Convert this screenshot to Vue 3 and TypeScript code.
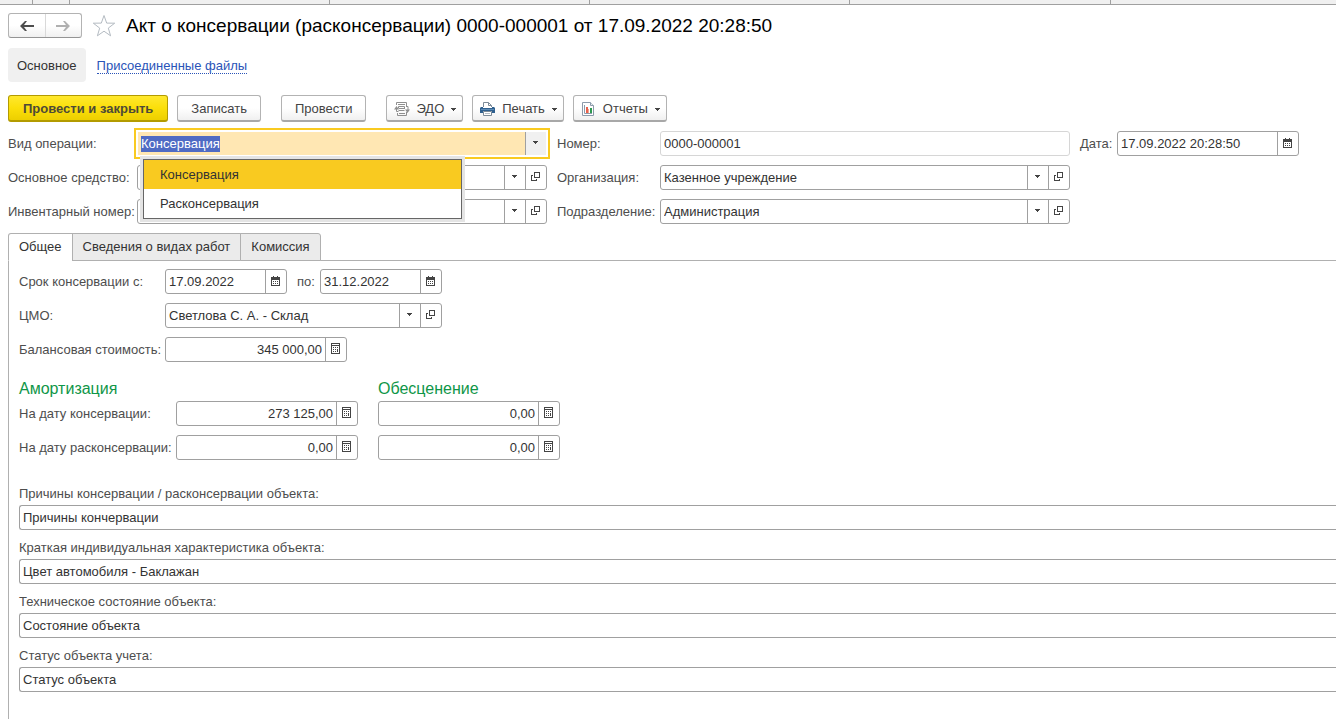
<script setup lang="ts">
import { nextTick, onMounted, ref } from 'vue'

type Kind = 'drop' | 'open' | 'date' | 'calc'

const operations = ['Консервация', 'Расконсервация']
const operation = ref(operations[0])
const operationInput = ref<HTMLInputElement | null>(null)
const listOpen = ref(true)

const number = ref('0000-000001')
const date = ref('17.09.2022 20:28:50')
const dateFrom = ref('17.09.2022')
const dateTo = ref('31.12.2022')
const cost = ref('345 000,00')

const tabs = ['Общее', 'Сведения о видах работ', 'Комиссия']
const activeTab = ref(0)

const amounts = ref([
  { id: 'at-cons', label: 'На дату консервации:', amortization: '273 125,00', impairment: '0,00' },
  { id: 'at-uncons', label: 'На дату расконсервации:', amortization: '0,00', impairment: '0,00' },
])

const notes = ref([
  { id: 'reasons', label: 'Причины консервации / расконсервации объекта:', value: 'Причины кончервации' },
  { id: 'feature', label: 'Краткая индивидуальная характеристика объекта:', value: 'Цвет автомобиля - Баклажан' },
  { id: 'state', label: 'Техническое состояние объекта:', value: 'Состояние объекта' },
  { id: 'status', label: 'Статус объекта учета:', value: 'Статус объекта' },
])

const icons: Record<Kind, { w: number; h: number; d: string }> = {
  drop: { w: 5, h: 3, d: 'M0 0h5v1h-1v1h-1v1h-1v-1h-1v-1h-1z' },
  open: {
    w: 9,
    h: 9,
    d: 'M3 0h6v6h-6zM4 1v4h4v-4zM0 3h2v1h-1v4h4v-1h1v2h-6z',
  },
  date: {
    w: 9,
    h: 10,
    d: 'M0 1h2v-1h1v1h3v-1h1v1h2v9h-9zM1 4v5h7v-5zM2 5h1v1h-1zM4 5h1v1h-1zM6 5h1v1h-1zM2 7h1v1h-1zM4 7h1v1h-1zM6 7h1v1h-1z',
  },
  calc: {
    w: 9,
    h: 11,
    d: 'M0 0h9v11h-9zM1 1v1h7v-1zM1 3v7h7v-7zM2 4h1v1h-1zM4 4h1v1h-1zM6 4h1v1h-1zM2 6h1v1h-1zM4 6h1v1h-1zM6 6h1v3h-1zM2 8h1v1h-1zM4 8h1v1h-1z',
  },
}

function choose(item: string) {
  operation.value = item
  listOpen.value = false
}

onMounted(async () => {
  await nextTick()
  operationInput.value?.focus()
  operationInput.value?.select()
})
</script>

<template>
  <div class="page">
    <div class="strip" aria-hidden="true"><i v-for="n in 7" :key="n"></i></div>

    <header class="head">
      <div class="history">
        <button type="button" aria-label="Назад">
          <svg width="14" height="10" viewBox="0 0 14 10"><path d="M5 0 0 5l5 5h2L4 6h10V4H4l3-4z" fill="#4d4d4d" /></svg>
        </button>
        <button type="button" aria-label="Вперед">
          <svg width="14" height="10" viewBox="0 0 14 10"><path d="M9 0l5 5-5 5H7l3-4H0V4h10L7 0z" fill="#b0b0b0" /></svg>
        </button>
      </div>
      <button type="button" class="star" aria-label="Избранное">
        <svg width="24" height="24" viewBox="0 0 24 24">
          <path d="M12 1.500l2.700 7.600 8 .1-6.400 4.900 2.300 7.700L12 17.200l-6.600 4.600 2.300-7.700L1.300 9.200l8-.1z" fill="#fff" stroke="#b4bbc2" />
        </svg>
      </button>
      <h1>Акт о консервации (расконсервации) 0000-000001 от 17.09.2022 20:28:50</h1>
    </header>

    <nav class="sections">
      <span class="current">Основное</span>
      <a href="#files">Присоединенные файлы</a>
    </nav>

    <div class="toolbar">
      <button type="button" class="btn primary">Провести и закрыть</button>
      <button type="button" class="btn">Записать</button>
      <button type="button" class="btn spaced">Провести</button>
      <button type="button" class="btn menu spaced">
        <svg width="16" height="15" viewBox="0 0 16 15" fill="none" stroke="#8f8f8f">
          <path d="M2.500 3V.5h10V4M4 2.500h7M4.500 4.500h6v2M4.500 4.500v2M5 6.500h6M4.500 8.500h6M3.500 11V13.500h9V10M5 11.500h6" />
          <path d="M2.500 6v3.500h2M14 8V4.500h-2" />
          <path d="M0 7.500 2.500 4 5 7.500zM11 7.500h5L13.500 11z" fill="#8f8f8f" stroke="none" />
        </svg>
        <span>ЭДО</span>
        <svg class="caret" width="5" height="3" viewBox="0 0 5 3"><path :d="icons.drop.d" /></svg>
      </button>
      <button type="button" class="btn menu">
        <svg width="16" height="14" viewBox="0 0 16 14">
          <path d="M3.500 5V.5h5l3 3V5" fill="#fff" stroke="#7d8b98" />
          <path d="M8.500.5v3h3" fill="none" stroke="#7d8b98" />
          <path d="M1 5h2v1h9V5h2l1 1v5h-3V9H3v2H0V6z" fill="#2f608f" />
          <path d="M1 7h13v1H1z" fill="#5d8bb5" />
          <path d="M3.500 9.500h8v4h-8z" fill="#fff" stroke="#7d8b98" />
          <path d="M5 11.500h5" stroke="#b5bec6" />
        </svg>
        <span>Печать</span>
        <svg class="caret" width="5" height="3" viewBox="0 0 5 3"><path :d="icons.drop.d" /></svg>
      </button>
      <button type="button" class="btn menu">
        <svg width="16" height="14" viewBox="-1 0 16 14">
          <path d="M.5.5h8l3 3v10H.5z" fill="#fff" stroke="#8c9bab" />
          <path d="M8.500.5v3h3" fill="#e6ebf0" stroke="#8c9bab" />
          <path d="M2.500 3v8.500H10" fill="none" stroke="#8c9bab" />
          <path d="M4 5h2v6H4z" fill="#e8604c" />
          <path d="M6 7h1v4H6z" fill="#f0a58e" />
          <path d="M8 6h2v5H8z" fill="#2e9a50" />
        </svg>
        <span>Отчеты</span>
        <svg class="caret" width="5" height="3" viewBox="0 0 5 3"><path :d="icons.drop.d" /></svg>
      </button>
    </div>

    <div class="form">
      <label for="operation">Вид операции:</label>
      <div class="field active">
        <input
          id="operation"
          ref="operationInput"
          v-model="operation"
          type="text"
          role="combobox"
          aria-controls="operation-list"
          :aria-expanded="listOpen"
          autocomplete="off"
        />
        <button type="button" aria-label="Показать список" @click="listOpen = !listOpen">
          <svg width="5" height="3" viewBox="0 0 5 3"><path :d="icons.drop.d" /></svg>
        </button>
        <ul v-if="listOpen" id="operation-list" class="popup" role="listbox">
          <li
            v-for="item in operations"
            :key="item"
            role="option"
            :aria-selected="item === operation"
            :class="{ chosen: item === operation }"
            @click="choose(item)"
          >
            {{ item }}
          </li>
        </ul>
      </div>
      <label for="number" class="second">Номер:</label>
      <div class="field pale"><input id="number" v-model="number" type="text" readonly /></div>
      <label for="date" class="second">Дата:</label>
      <div class="field">
        <input id="date" v-model="date" type="text" />
        <button type="button" aria-label="Выбрать дату">
          <svg width="9" height="10" viewBox="0 0 9 10"><path fill-rule="evenodd" :d="icons.date.d" /></svg>
        </button>
      </div>

      <label for="asset" class="line-start">Основное средство:</label>
      <div class="field">
        <div class="pick">
          <select id="asset"><option></option></select>
          <span><svg width="5" height="3" viewBox="0 0 5 3"><path :d="icons.drop.d" /></svg></span>
        </div>
        <button type="button" aria-label="Открыть основное средство">
          <svg width="9" height="9" viewBox="0 0 9 9"><path fill-rule="evenodd" :d="icons.open.d" /></svg>
        </button>
      </div>
      <label for="org" class="second">Организация:</label>
      <div class="field">
        <div class="pick">
          <select id="org"><option>Казенное учреждение</option></select>
          <span><svg width="5" height="3" viewBox="0 0 5 3"><path :d="icons.drop.d" /></svg></span>
        </div>
        <button type="button" aria-label="Открыть организацию">
          <svg width="9" height="9" viewBox="0 0 9 9"><path fill-rule="evenodd" :d="icons.open.d" /></svg>
        </button>
      </div>

      <label for="inventory" class="line-start">Инвентарный номер:</label>
      <div class="field">
        <div class="pick">
          <select id="inventory"><option></option></select>
          <span><svg width="5" height="3" viewBox="0 0 5 3"><path :d="icons.drop.d" /></svg></span>
        </div>
        <button type="button" aria-label="Открыть инвентарный номер">
          <svg width="9" height="9" viewBox="0 0 9 9"><path fill-rule="evenodd" :d="icons.open.d" /></svg>
        </button>
      </div>
      <label for="unit" class="second">Подразделение:</label>
      <div class="field">
        <div class="pick">
          <select id="unit"><option>Администрация</option></select>
          <span><svg width="5" height="3" viewBox="0 0 5 3"><path :d="icons.drop.d" /></svg></span>
        </div>
        <button type="button" aria-label="Открыть подразделение">
          <svg width="9" height="9" viewBox="0 0 9 9"><path fill-rule="evenodd" :d="icons.open.d" /></svg>
        </button>
      </div>
    </div>

    <div class="tabs" role="tablist">
      <button
        v-for="(tab, i) in tabs"
        :key="tab"
        type="button"
        role="tab"
        :aria-selected="i === activeTab"
        :class="{ on: i === activeTab }"
        @click="activeTab = i"
      >
        {{ tab }}
      </button>
    </div>

    <main class="panel">
      <div class="general">
        <label for="from">Срок консервации с:</label>
        <div class="period">
          <div class="field short">
            <input id="from" v-model="dateFrom" type="text" />
            <button type="button" aria-label="Выбрать дату начала">
              <svg width="9" height="10" viewBox="0 0 9 10"><path fill-rule="evenodd" :d="icons.date.d" /></svg>
            </button>
          </div>
          <label for="to">по:</label>
          <div class="field short">
            <input id="to" v-model="dateTo" type="text" />
            <button type="button" aria-label="Выбрать дату окончания">
              <svg width="9" height="10" viewBox="0 0 9 10"><path fill-rule="evenodd" :d="icons.date.d" /></svg>
            </button>
          </div>
        </div>

        <label for="cmo">ЦМО:</label>
        <div class="field">
          <div class="pick">
            <select id="cmo"><option>Светлова С. А. - Склад</option></select>
            <span><svg width="5" height="3" viewBox="0 0 5 3"><path :d="icons.drop.d" /></svg></span>
          </div>
          <button type="button" aria-label="Открыть ЦМО">
            <svg width="9" height="9" viewBox="0 0 9 9"><path fill-rule="evenodd" :d="icons.open.d" /></svg>
          </button>
        </div>

        <label for="cost">Балансовая стоимость:</label>
        <div class="field amount">
          <input id="cost" v-model="cost" type="text" />
          <button type="button" aria-label="Калькулятор">
            <svg width="9" height="11" viewBox="0 0 9 11"><path fill-rule="evenodd" :d="icons.calc.d" /></svg>
          </button>
        </div>
      </div>

      <div class="sums">
        <h2 id="amortization">Амортизация</h2>
        <h2 id="impairment">Обесценение</h2>
        <template v-for="row in amounts" :key="row.id">
          <label :for="row.id">{{ row.label }}</label>
          <div class="field amount">
            <input :id="row.id" v-model="row.amortization" type="text" />
            <button type="button" aria-label="Калькулятор">
              <svg width="9" height="11" viewBox="0 0 9 11"><path fill-rule="evenodd" :d="icons.calc.d" /></svg>
            </button>
          </div>
          <div class="field amount">
            <input v-model="row.impairment" type="text" aria-labelledby="impairment" />
            <button type="button" aria-label="Калькулятор">
              <svg width="9" height="11" viewBox="0 0 9 11"><path fill-rule="evenodd" :d="icons.calc.d" /></svg>
            </button>
          </div>
        </template>
      </div>

      <div class="notes">
        <div v-for="note in notes" :key="note.id" class="note">
          <label :for="note.id">{{ note.label }}</label>
          <div class="field"><input :id="note.id" v-model="note.value" type="text" /></div>
        </div>
      </div>
    </main>
  </div>
</template>

<style>
body {
  margin: 0;
  background: #fff;
}
</style>

<style scoped>
.page {
  box-sizing: border-box;
  min-height: 100vh;
  display: flex;
  flex-direction: column;
  overflow: hidden;
  font: 13px/16px 'Liberation Sans', Arial, sans-serif;
  color: #4d4d4d;
}
.page * {
  box-sizing: border-box;
}
button,
input,
select {
  font: inherit;
  color: inherit;
  margin: 0;
  padding: 0;
  border: 0;
  background: none;
  outline: none;
}
button {
  cursor: pointer;
}
svg {
  display: block;
  flex: none;
}
.strip {
  height: 5px;
  display: grid;
  grid-template-columns: 33px 37px 260px 260px 260px 261px 1fr;
  background: #f0f0f0;
  border-bottom: 1px solid #a0a0a0;
}
.strip i {
  border-right: 1px solid #a0a0a0;
}
.strip i:last-child {
  border-right: 0;
}
.head {
  display: flex;
  align-items: center;
  padding: 8px 8px 0;
}
.history {
  display: flex;
  width: 74px;
  height: 25px;
  border: 1px solid #b3b3b3;
  border-bottom-color: #949494;
  border-radius: 3px;
  background: linear-gradient(#fff 50%, #f0f0f0);
}
.history button {
  flex: 1;
  display: grid;
  place-items: center;
}
.history button + button {
  border-left: 1px solid #d9d9d9;
}
.star {
  margin: 0 10px;
}
h1 {
  margin: 0;
  font-size: 19px;
  line-height: 24px;
  font-weight: 400;
  color: #000;
  white-space: nowrap;
}
.sections {
  display: flex;
  align-items: center;
  gap: 11px;
  padding: 10px 8px 0;
}
.current {
  padding: 10px 9px 8px;
  background: #f0f0f0;
  border-radius: 4px;
  color: #333;
}
.sections a {
  color: #2a54b8;
  margin-top: 2px;
  line-height: 14px;
  text-decoration: none;
  border-bottom: 1px dotted #2a54b8;
}
.toolbar {
  display: flex;
  gap: 9px;
  padding: 13px 8px 0;
}
.btn {
  height: 27px;
  padding: 2px 13px 0;
  border: 1px solid #b3b3b3;
  border-bottom: 2px solid #a8a8a8;
  border-radius: 3px;
  background: linear-gradient(#fff 50%, #f0f0f0);
  color: #444;
  white-space: nowrap;
}
.btn.spaced {
  margin-left: 11px;
}
.btn.primary {
  padding: 2px 14px 0;
  border-color: #b39b00;
  background: linear-gradient(#ffe82e, #fbdf0a 50%, #edcf00);
  color: #4d4a38;
  font-weight: 700;
}
.btn.menu {
  display: flex;
  align-items: center;
  padding: 2px 6px 0 7px;
}
.btn.menu span {
  margin: 0 7px 0 6px;
}
.caret,
.field svg {
  fill: #444;
  shape-rendering: crispEdges;
}
.form {
  display: grid;
  grid-template-columns: 129px minmax(0, 1fr) 113px minmax(0, 1fr) 47px 182px;
  row-gap: 9px;
  align-items: center;
  padding: 9px 37px 9px 8px;
}
label {
  white-space: nowrap;
}
.second {
  padding-left: 10px;
}
.line-start {
  grid-column-start: 1;
}
.field {
  position: relative;
  display: flex;
  height: 25px;
  border: 1px solid #a0a0a0;
  border-radius: 3px;
  background: #fff;
  color: #333;
}
.field input {
  flex: 1;
  min-width: 0;
  width: 100%;
  padding: 0 3px;
}
.field button,
.pick span {
  flex: none;
  width: 21px;
  display: grid;
  place-items: center;
  padding: 0 1px 2px 0;
  border-left: 1px solid #a0a0a0;
}
.pick {
  flex: 1;
  min-width: 0;
  display: grid;
  grid-template-columns: minmax(0, 1fr) 21px;
}
.pick select {
  grid-area: 1 / 1 / 2 / 3;
  appearance: none;
  padding: 0 24px 0 3px;
}
.pick span {
  grid-area: 1 / 2;
  pointer-events: none;
}
.field.pale {
  border-color: #d6d6d6;
}
.field.active {
  border-color: #fff;
  border-radius: 0;
  outline: 2px solid #f9ca20;
  outline-offset: 1px;
}
.active input {
  background: #ffe7b3;
}
.active input::selection {
  background: #4f6bc4;
  color: #fff;
}
.active > button {
  background: #f0f0f0;
}
.popup {
  position: absolute;
  z-index: 2;
  top: 27px;
  left: 5px;
  width: 319px;
  margin: 0;
  padding: 0;
  list-style: none;
  border: 1px solid #666;
  background: #fff;
  box-shadow: 0 0 0 3px #e4e4e4;
}
.popup li {
  padding: 7px 16px 6px;
}
.popup .chosen {
  background: #f9ca20;
}
.tabs {
  display: flex;
  margin-left: 8px;
  box-shadow: inset 0 -1px #b0b0b0;
}
.tabs button {
  height: 28px;
  padding: 0 10px;
  border: 1px solid #b0b0b0;
  background: #ebebeb;
  color: #333;
}
.tabs button + button {
  margin-left: -1px;
}
.tabs button:first-child {
  border-top-left-radius: 3px;
}
.tabs button:last-child {
  border-top-right-radius: 3px;
}
.tabs .on {
  background: #fff;
  border-bottom-color: #fff;
}
.panel {
  flex: 1;
  margin-left: 8px;
  padding: 8px 0 27px 10px;
  border-left: 1px solid #b0b0b0;
}
.general {
  display: grid;
  grid-template-columns: 146px 277px;
  row-gap: 9px;
  align-items: center;
}
.period {
  display: flex;
  align-items: center;
}
.period label {
  margin: 0 auto 0 10px;
}
.short {
  width: 122px;
}
.amount {
  width: 182px;
}
.amount input {
  text-align: right;
}
.sums {
  display: grid;
  grid-template-columns: 157px 202px 182px;
  row-gap: 9px;
  align-items: center;
  padding-top: 17px;
}
h2 {
  margin: 0 0 -7px;
  font-size: 16px;
  line-height: 20px;
  font-weight: 400;
  color: #0f9648;
}
h2:first-child {
  grid-column: 1 / 3;
}
.notes {
  display: grid;
  gap: 10px;
  padding-top: 26px;
}
.note {
  display: grid;
  gap: 3px;
}
.note .field {
  border-right: 0;
  border-radius: 3px 0 0 3px;
}
</style>
